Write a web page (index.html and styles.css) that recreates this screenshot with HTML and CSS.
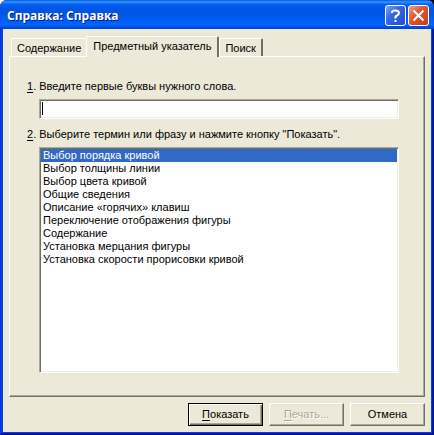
FILE: index.html
```
<!DOCTYPE html>
<html lang="ru">
<head>
  <meta charset="UTF-8" />
  <meta name="viewport" content="width=device-width, initial-scale=1.0" />
  <title>Справка: Справка</title>
  <link rel="stylesheet" href="styles.css">
</head>
<body>
  <div class="window">
    <header class="titlebar">
      <h1>Справка: Справка</h1>
      <button class="caption-btn help" type="button" aria-label="Помощь">
        <svg viewBox="0 0 19 19" width="19" height="19" fill="none" stroke="#fff" stroke-width="2">
          <path d="M6 7V6.500Q6 4.500 9.500 4.500T13 7Q13 8.500 11 9.500T9.500 12.500M8.500 15H10.500" />
        </svg>
      </button>
      <button class="caption-btn close" type="button" aria-label="Закрыть">
        <svg viewBox="0 0 19 19" width="19" height="19" fill="none" stroke="#fff" stroke-width="2">
          <path d="M4.500 4.500L14.500 14.500M14.500 4.500L4.500 14.500" />
        </svg>
      </button>
    </header>

    <main class="content">
      <div class="tabs" role="tablist">
        <button class="tab" type="button" role="tab">Содержание</button>
        <button class="tab active" type="button" role="tab" aria-selected="true">Предметный указатель</button>
        <button class="tab" type="button" role="tab">Поиск</button>
      </div>

      <section class="panel" role="tabpanel">
        <label for="word"><u>1</u>. Введите первые буквы нужного слова.</label>
        <div class="field">
          <input id="word" type="text" />
          <span class="caret"></span>
        </div>
        <label for="terms"><u>2</u>. Выберите термин или фразу и нажмите кнопку "Показать".</label>
        <select id="terms" class="terms" size="17">
          <option selected>Выбор порядка кривой</option>
          <option>Выбор толщины линии</option>
          <option>Выбор цвета кривой</option>
          <option>Общие сведения</option>
          <option>Описание «горячих» клавиш</option>
          <option>Переключение отображения фигуры</option>
          <option>Содержание</option>
          <option>Установка мерцания фигуры</option>
          <option>Установка скорости прорисовки кривой</option>
        </select>
      </section>

      <footer class="actions">
        <button class="btn default" type="button"><span><u>П</u>оказать</span></button>
        <button class="btn" type="button" disabled><span><u>П</u>ечать...</span></button>
        <button class="btn" type="button"><span>Отмена</span></button>
      </footer>
    </main>
  </div>
</body>
</html>
```
FILE: styles.css
```
* {
  box-sizing: border-box;
}
body {
  margin: 0;
  background: linear-gradient(90deg, #fff 50%, #000 50%);
  font-family: "Liberation Sans", Arial, sans-serif;
  font-size: 11px;
  line-height: 13px;
  color: #000;
}
button, input, select {
  font: inherit;
  color: inherit;
  border-radius: 0;
  outline: none;
}
u {
  text-underline-offset: 2px;
}
.window {
  display: flex;
  flex-direction: column;
  min-height: 100vh;
  padding: 0 3px 3px;
  border-radius: 7px 7px 0 0;
  background: #0a3fe0;
  box-shadow: inset 1px 0 #0831d9, inset -1px -1px #00138c, inset -2px -2px #001ea0;
}

/* title bar */
.titlebar {
  display: flex;
  align-items: center;
  gap: 2px;
  height: 29px;
  margin: 0 -3px;
  padding: 2px 5px 0 7px;
  border-radius: 7px 7px 0 0;
  background: linear-gradient(#0058e6 0, #3a93ff 2px, #0364f0 4px, #0055e5 8px, #0055e5 14px, #0060fc 22px, #0066ff 25px, #0050e0 27px, #003dd7 29px);
}
.titlebar h1 {
  flex: 1;
  margin: 0;
  font-family: "Open Sans", "Trebuchet MS", sans-serif;
  font-size: 12px;
  font-weight: 700;
  line-height: 18px;
  color: #fff;
  text-shadow: 1px 1px #0a1883;
}
.caption-btn {
  width: 21px;
  height: 21px;
  padding: 0;
  border: 1px solid #fff;
  border-radius: 3px;
}
.caption-btn svg {
  display: block;
}
.help {
  background: linear-gradient(135deg, #7da2f5, #3668e3 40%, #1c4fcf);
}
.close {
  background: linear-gradient(135deg, #f0a08a, #e2593a 40%, #c63a12);
}

.content {
  flex: 1;
  display: flex;
  flex-direction: column;
  padding: 7px 6px 6px;
  background: #ece9d8;
}

/* tabs */
.tabs {
  display: flex;
  align-items: flex-end;
  padding-left: 2px;
}
.tab {
  height: 18px;
  padding: 2px 5px 0;
  border: solid;
  border-width: 1px 2px 0 1px;
  border-color: #fff #716f64 #fff #fff;
  border-radius: 2px 2px 0 0;
  background: #ece9d8;
  white-space: nowrap;
}
.tab:first-child {
  border-right-width: 0;
}
.tab.active {
  position: relative;
  height: 21px;
  margin-bottom: -1px;
  padding: 0 6px 2px;
}

/* sunken and raised edges */
.panel {
  flex: 1;
  display: flex;
  flex-direction: column;
  padding: 23px 25px 23px 17px;
  border: 1px solid;
  border-color: #fff #716f64 #716f64 #fff;
  box-shadow: inset -1px -1px #aca899;
}
.panel label {
  height: 19px;
}
.field {
  position: relative;
  margin: 0 0 9px 12px;
}
.field input {
  display: block;
  width: 100%;
  height: 20px;
  padding: 0 2px;
  caret-color: transparent;
}
.caret {
  position: absolute;
  left: 3px;
  top: 3px;
  width: 1px;
  height: 13px;
  background: #000;
}
.field input, .terms {
  border: 1px solid;
  border-color: #aca899 #fff #fff #aca899;
  background: #fff;
  box-shadow: inset 1px 1px #716f64, inset -1px -1px #f1efe2;
}
.terms {
  flex: 1;
  margin-left: 12px;
  padding: 1px;
  overflow: hidden;
}
.terms option {
  min-height: 13px;
  padding: 0 2px;
}
.terms option:checked {
  background: linear-gradient(#316ac5, #316ac5);
  color: #fff;
}

/* buttons */
.actions {
  display: flex;
  justify-content: flex-end;
  gap: 6px;
  padding-top: 6px;
}
.btn {
  width: 75px;
  height: 23px;
  padding: 0;
  border: 1px solid;
  border-color: #fff #716f64 #716f64 #fff;
  background: #ece9d8;
  box-shadow: inset -1px -1px #aca899;
}
.btn.default {
  border-color: #000;
  box-shadow: inset 1px 1px #fff, inset -1px -1px #716f64, inset -2px -2px #aca899;
}
.btn:disabled {
  color: #aca899;
  text-shadow: 1px 1px #fff;
}
```
